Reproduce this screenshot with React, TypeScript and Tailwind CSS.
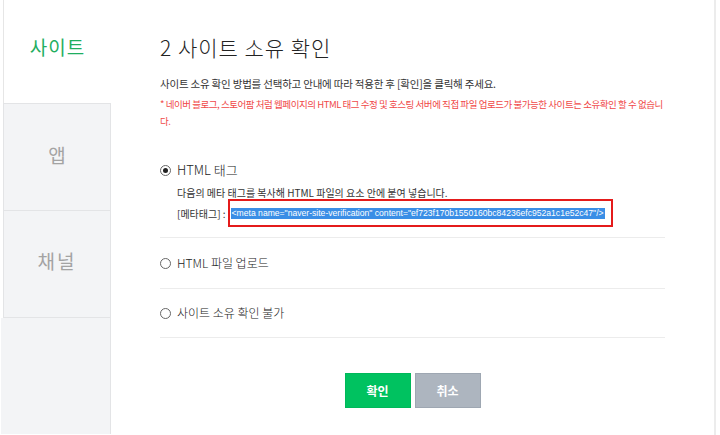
import React from "react";

const KR = { fontFamily: '"Noto Sans CJK KR", "Noto Sans", sans-serif' };

function Radio({ checked }: { checked?: boolean }) {
  return (
    <span className="inline-flex items-center justify-center w-[11px] h-[11px] rounded-full border border-[#666] bg-white mr-[6px] shrink-0">
      {checked && <span className="w-[5px] h-[5px] rounded-full bg-[#222]" />}
    </span>
  );
}

export default function App() {
  return (
    <div className="w-[720px] h-[435px] flex bg-white overflow-hidden" style={KR}>
      {/* sidebar */}
      <div className="w-[111px] flex flex-col shrink-0">
        <div className="ml-[3px] h-[103px] border-l border-[#e6e6e6] bg-white flex items-center justify-center pb-[8px]">
          <span className="text-[19px] text-[#1fae5f] tracking-[1px]">사이트</span>
        </div>
        <div className="ml-[3px] h-[107px] border-l border-t border-r border-[#e3e4e6] bg-[#f3f4f6] flex items-center justify-center pb-[4px]">
          <span className="text-[19px] text-[#a3a3a3]">앱</span>
        </div>
        <div className="ml-[3px] h-[108px] border-l border-t border-r border-b border-[#e3e4e6] bg-[#f3f4f6] flex items-center justify-center pb-[6px]">
          <span className="text-[19px] text-[#a3a3a3] tracking-[2px]">채널</span>
        </div>
        <div className="flex-1 ml-[1px] mb-[1px] bg-[#f3f4f6] border-r border-[#e3e4e6]" />
      </div>

      {/* main */}
      <div className="w-[605px] border-r-[2px] border-[#ececec] px-[49px] flex flex-col">
        <div className="mt-[34px] h-[26px] leading-[26px] text-[21px] text-[#222] font-light tracking-[1px]">
          2 사이트 소유 확인
        </div>
        <div className="mt-[15px] h-[18px] leading-[18px] text-[10.5px] text-[#333] tracking-[-0.2px]">
          사이트 소유 확인 방법를 선택하고 안내에 따라 적용한 후 [확인]을 클릭해 주세요.
        </div>
        <div className="mt-[3px] leading-[17px] text-[9.5px] text-[#f04848] tracking-[-0.45px] whitespace-nowrap">
          * 네이버 블로그, 스토어팜 처럼 웹페이지의 HTML 태그 수정 및 호스팅 서버에 직접 파일 업로드가 불가능한 사이트는 소유확인 할 수 없습니
          <br />
          다.
        </div>

        {/* option 1 */}
        <div className="mt-[30px] h-[20px] flex items-center text-[13px] text-[#222] font-light">
          <Radio checked />
          <span>HTML 태그</span>
        </div>
        <div className="pl-[17px] mt-[6px] h-[13px] leading-[13px] text-[10px] text-[#333]">
          다음의 메타 태그를 복사해 HTML 파일의 요소 안에 붙여 넣습니다.
        </div>
        <div className="pl-[17px] h-[28px] flex items-center text-[10px] text-[#333]">
          <span className="mr-[2px]">[메타태그] :</span>
          <span className="h-[28px] w-[385px] border-[2px] border-[#e41b1b] flex items-center pl-[1px]">
            <span
              className="bg-[#3a8ee6] text-white text-[8.6px] leading-[11px] px-[1px] whitespace-nowrap"
              style={{ fontFamily: '"Liberation Sans", Arial, sans-serif' }}
            >
              {'<meta name="naver-site-verification" content="ef723f170b1550160bc84236efc952a1c1e52c47"/>'}
            </span>
          </span>
        </div>
        <div className="mt-[10px] h-px bg-[#ececec]" />

        {/* option 2 */}
        <div className="py-[15px]">
          <div className="h-[20px] flex items-center text-[12px] text-[#222] font-light">
            <Radio />
            <span>HTML 파일 업로드</span>
          </div>
        </div>
        <div className="h-px bg-[#ececec]" />

        {/* option 3 */}
        <div className="py-[14px]">
          <div className="h-[20px] flex items-center text-[12px] text-[#222] font-light">
            <Radio />
            <span>사이트 소유 확인 불가</span>
          </div>
        </div>
        <div className="h-px bg-[#ececec]" />

        {/* buttons */}
        <div className="mt-[35px] flex justify-center gap-[4px]">
          <button className="w-[66px] h-[35px] bg-[#00c260] border border-[#00b85a] text-white text-[12px] font-bold">
            확인
          </button>
          <button className="w-[66px] h-[35px] bg-[#adb5bf] border border-[#9ea7b2] text-white text-[12px] font-bold">
            취소
          </button>
        </div>
      </div>
      <div className="flex-1 bg-white" />
    </div>
  );
}
